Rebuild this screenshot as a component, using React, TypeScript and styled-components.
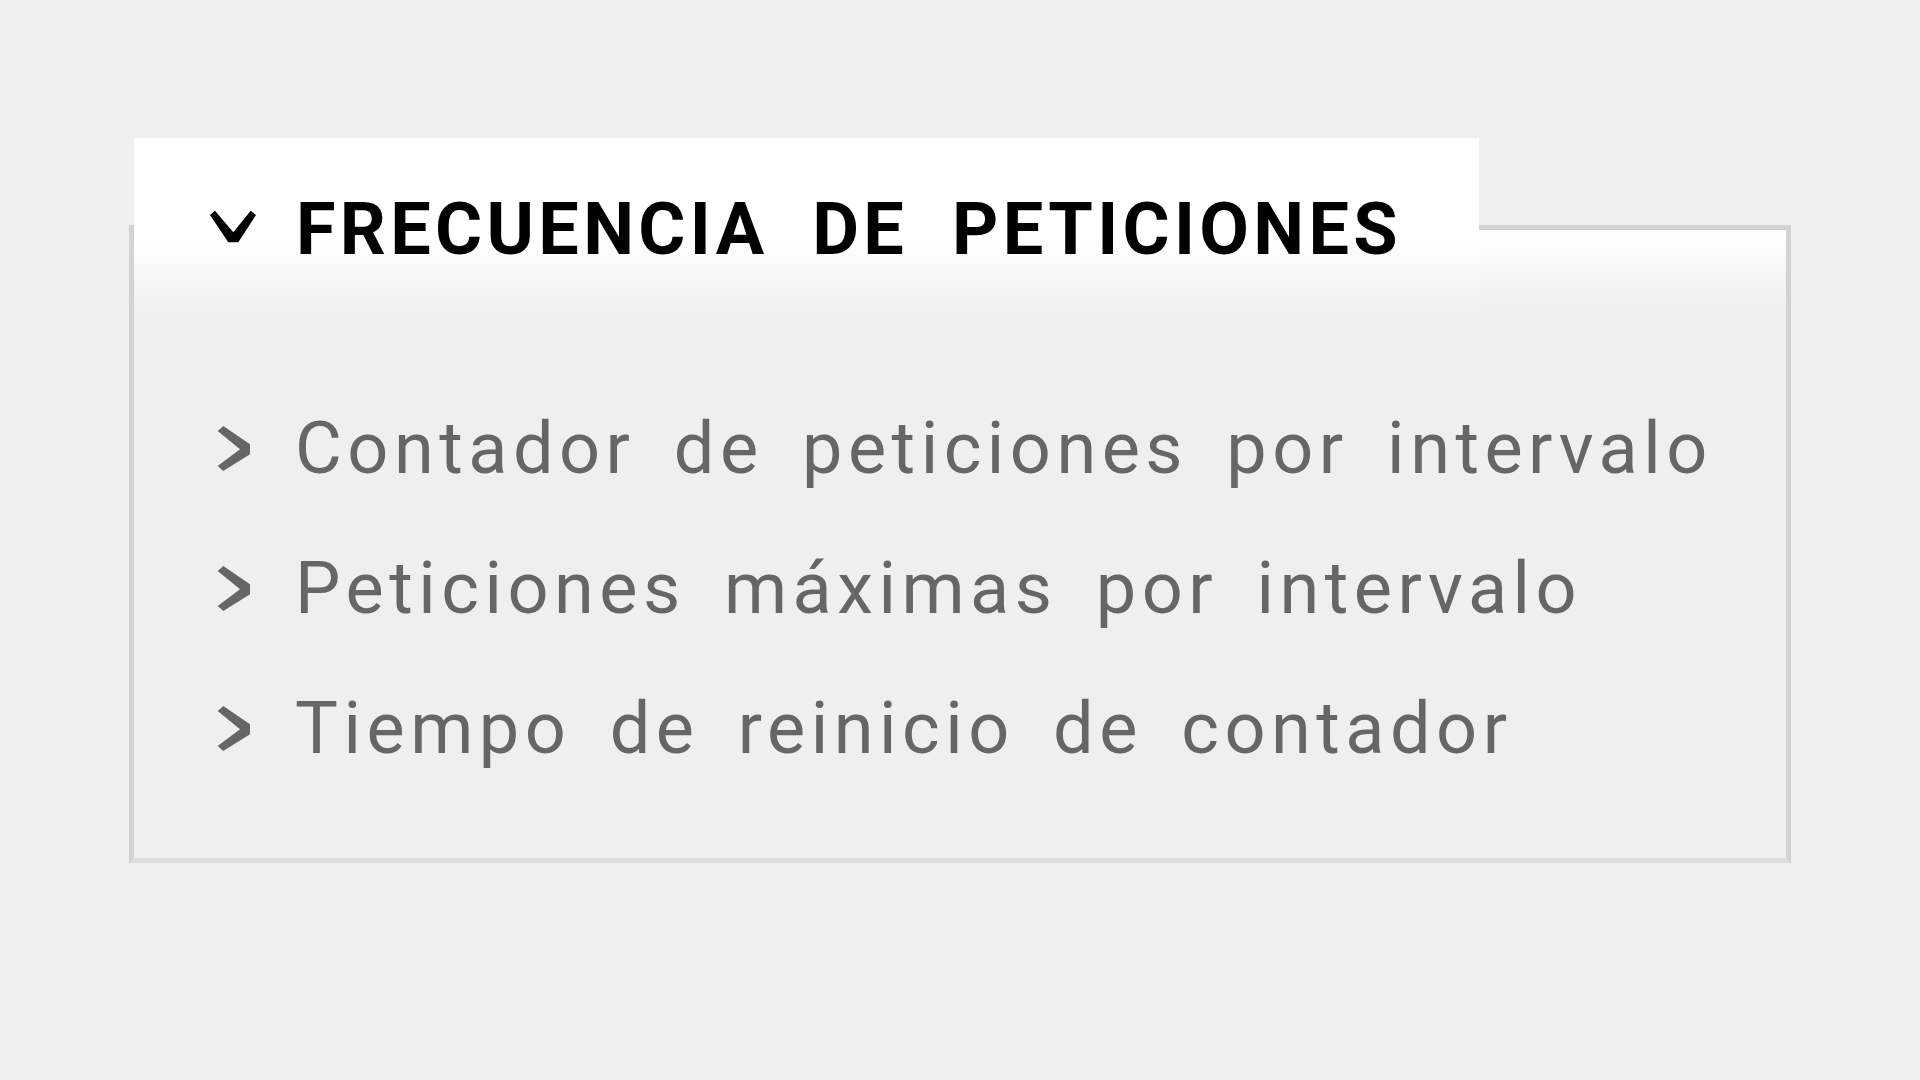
import React from "react";
import styled, { createGlobalStyle } from "styled-components";

/**
 * Global
 */

const GlobalStyle = createGlobalStyle`
  html, body {
    margin: 0;
    padding: 0;
    background: #efefef;
    font-family: Roboto, "Liberation Sans", sans-serif;
  }
`;

const borderColor = "#d3d3d3";
const pageBg = "#efefef";

/**
 * Styled Component
 */

const Page = styled.main`
  min-height: 1080px;
  padding: 225px 0 0 129px;
  box-sizing: border-box;
`;

const Panel = styled.section`
  width: 1662px;
  height: 638px;
  box-sizing: border-box;
  border: 5px solid ${borderColor};
  border-bottom-color: #dedede;
  background: linear-gradient(to bottom, #ffffff 0, ${pageBg} 80px);
`;

/* Header tab sits over the panel's top edge */
const Header = styled.header`
  display: flex;
  align-items: center;
  gap: 39px;
  width: 1345px;
  height: 175px;
  box-sizing: border-box;
  margin-top: -92px;
  padding: 8px 0 0 75px;
  background: linear-gradient(to bottom, #ffffff 58%, ${pageBg} 100%);
`;

const Toggle = styled.svg`
  flex: none;
  margin-bottom: 7px;
`;

const Title = styled.h2`
  margin: 0;
  font-size: 72px;
  font-weight: 700;
  color: #000;
  letter-spacing: 0.06em;
  word-spacing: 0.3em;
  line-height: 1;
`;

const Items = styled.ul`
  list-style: none;
  margin: 0;
  padding: 65px 0 0 82px;
`;

const Item = styled.li`
  display: flex;
  align-items: center;
  gap: 44px;
  height: 140px;
  font-size: 72px;
  color: #666666;
  letter-spacing: 5.5px;
  word-spacing: 15px;
`;

const Bullet = styled.svg`
  flex: none;
`;

/**
 * Icons
 */

const ChevronDown = () => (
  <Toggle width="48" height="34" viewBox="0 0 48 34" aria-hidden="true">
    <polygon
      points="1,6 6,1.7 24.3,23.3 41.7,1.7 47,6 29.3,33.3 19.3,33.3"
      fill="#000"
    />
  </Toggle>
);

const ChevronRight = () => (
  <Bullet width="35" height="47" viewBox="0 0 35 47" aria-hidden="true">
    <polygon
      points="7.3,1 34,19.3 34,29.3 7.3,46 1.7,41 24,24.3 1.7,6"
      fill="#666666"
    />
  </Bullet>
);

/**
 * Template
 */

const entries = [
  "Contador de peticiones por intervalo",
  "Peticiones máximas por intervalo",
  "Tiempo de reinicio de contador",
];

export default function App() {
  return (
    <>
      <GlobalStyle />
      <Page>
        <Panel>
          <Header>
            <ChevronDown />
            <Title>FRECUENCIA DE PETICIONES</Title>
          </Header>
          <Items>
            {entries.map((label) => (
              <Item key={label}>
                <ChevronRight />
                <span>{label}</span>
              </Item>
            ))}
          </Items>
        </Panel>
      </Page>
    </>
  );
}
